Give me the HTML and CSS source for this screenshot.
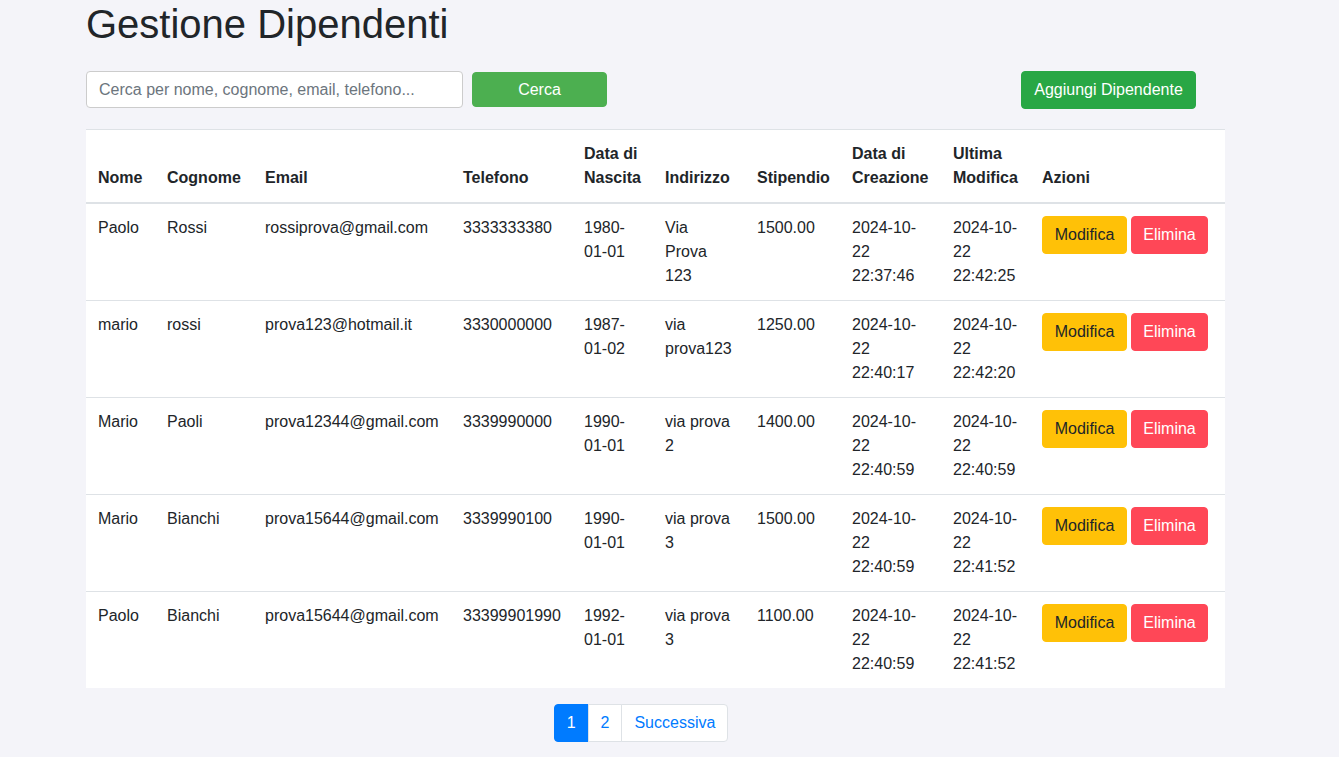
FILE: index.html
```html
<!DOCTYPE html>
<html lang="it">
<head>
<meta charset="utf-8">
<title>Gestione Dipendenti</title>
<link rel="stylesheet" href="styles.css">
</head>
<body>
<div class="container">
  <h1 class="title">Gestione Dipendenti</h1>
  <div class="toolbar">
    <form class="search">
      <input class="search-input" type="text" placeholder="Cerca per nome, cognome, email, telefono...">
      <button class="btn btn-search" type="button">Cerca</button>
    </form>
    <button class="btn btn-add" type="button">Aggiungi Dipendente</button>
  </div>
  <table class="table">
    <colgroup>
      <col class="c-nome"><col class="c-cognome"><col class="c-email"><col class="c-tel"><col class="c-nascita"><col class="c-ind"><col class="c-stip"><col class="c-crea"><col class="c-mod"><col class="c-az">
    </colgroup>
    <thead>
      <tr>
        <th>Nome</th><th>Cognome</th><th>Email</th><th>Telefono</th><th>Data di Nascita</th><th>Indirizzo</th><th>Stipendio</th><th>Data di Creazione</th><th>Ultima Modifica</th><th>Azioni</th>
      </tr>
    </thead>
    <tbody>
      <tr>
        <td>Paolo</td><td>Rossi</td><td>rossiprova@gmail.com</td><td>3333333380</td><td>1980-01-01</td><td>Via Prova 123</td><td>1500.00</td><td>2024-10-22 22:37:46</td><td>2024-10-22 22:42:25</td>
        <td><div class="actions"><button class="btn btn-edit">Modifica</button><button class="btn btn-del">Elimina</button></div></td>
      </tr>
      <tr>
        <td>mario</td><td>rossi</td><td>prova123@hotmail.it</td><td>3330000000</td><td>1987-01-02</td><td>via prova123</td><td>1250.00</td><td>2024-10-22 22:40:17</td><td>2024-10-22 22:42:20</td>
        <td><div class="actions"><button class="btn btn-edit">Modifica</button><button class="btn btn-del">Elimina</button></div></td>
      </tr>
      <tr>
        <td>Mario</td><td>Paoli</td><td>prova12344@gmail.com</td><td>3339990000</td><td>1990-01-01</td><td>via prova 2</td><td>1400.00</td><td>2024-10-22 22:40:59</td><td>2024-10-22 22:40:59</td>
        <td><div class="actions"><button class="btn btn-edit">Modifica</button><button class="btn btn-del">Elimina</button></div></td>
      </tr>
      <tr>
        <td>Mario</td><td>Bianchi</td><td>prova15644@gmail.com</td><td>3339990100</td><td>1990-01-01</td><td>via prova 3</td><td>1500.00</td><td>2024-10-22 22:40:59</td><td>2024-10-22 22:41:52</td>
        <td><div class="actions"><button class="btn btn-edit">Modifica</button><button class="btn btn-del">Elimina</button></div></td>
      </tr>
      <tr>
        <td>Paolo</td><td>Bianchi</td><td>prova15644@gmail.com</td><td>33399901990</td><td>1992-01-01</td><td>via prova 3</td><td>1100.00</td><td>2024-10-22 22:40:59</td><td>2024-10-22 22:41:52</td>
        <td><div class="actions"><button class="btn btn-edit">Modifica</button><button class="btn btn-del">Elimina</button></div></td>
      </tr>
    </tbody>
  </table>
  <nav class="pager">
    <ul class="pagination">
      <li class="page-item active"><a class="page-link">1</a></li>
      <li class="page-item"><a class="page-link">2</a></li>
      <li class="page-item"><a class="page-link">Successiva</a></li>
    </ul>
  </nav>
</div>
</body>
</html>
```
FILE: styles.css
```css
* { box-sizing: border-box; }
html, body { margin: 0; padding: 0; }
body {
  background: #f4f4f9;
  font-family: "Liberation Sans", Arial, sans-serif;
  font-size: 16px;
  line-height: 24px;
  color: #212529;
}
.container {
  width: 1110px;
  margin-left: 86px;
}
.title {
  margin: 0 0 23px 0;
  font-size: 40px;
  line-height: 48px;
  font-weight: 400;
  color: #212529;
}
.toolbar {
  display: flex;
  align-items: flex-start;
  justify-content: space-between;
  height: 38px;
  margin-bottom: 20px;
}
.search {
  display: flex;
  align-items: flex-start;
  margin: 0;
}
.search-input {
  width: 377px;
  height: 37px;
  padding: 6px 12px;
  border: 1px solid #ccc;
  border-radius: 4px;
  font-family: inherit;
  font-size: 16px;
  color: #495057;
  background: #fff;
  outline: none;
}
.search-input::placeholder { color: #6c757d; opacity: 1; }
.btn {
  display: inline-block;
  font-family: inherit;
  font-size: 16px;
  line-height: 24px;
  padding: 6px 12px;
  border: 1px solid transparent;
  border-radius: 4px;
  cursor: pointer;
  text-align: center;
  white-space: nowrap;
}
.btn-search {
  margin-left: 9px;
  margin-top: 1px;
  width: 135px;
  height: 35px;
  padding: 5px 12px;
  background: #4caf50;
  border-color: #4caf50;
  color: #fff;
}
.btn-add {
  width: 175px;
  padding: 6px 0;
  background: #28a745;
  border-color: #28a745;
  color: #fff;
}
.table {
  width: 1139px;
  table-layout: fixed;
  border-collapse: collapse;
  background: #fff;
}
.c-nome { width: 69px; }
.c-cognome { width: 98px; }
.c-email { width: 198px; }
.c-tel { width: 121px; }
.c-nascita { width: 81px; }
.c-ind { width: 92px; }
.c-stip { width: 95px; }
.c-crea { width: 101px; }
.c-mod { width: 89px; }
.c-az { width: 195px; }
.table th, .table td {
  padding: 12px;
  text-align: left;
  border-top: 1px solid #dee2e6;
  vertical-align: top;
}
.table thead th {
  vertical-align: bottom;
  border-bottom: 2px solid #dee2e6;
  font-weight: 700;
}
.table tbody tr:first-child td { border-top: none; }
.actions {
  display: flex;
  gap: 4px;
}
.btn-edit {
  width: 85px;
  padding: 6px 0;
  background: #ffc107;
  border-color: #ffc107;
  color: #212529;
}
.btn-del {
  width: 77px;
  padding: 6px 0;
  background: #ff4757;
  border-color: #ff4757;
  color: #fff;
}
.pager {
  display: flex;
  justify-content: center;
  margin-top: 16px;
}
.pagination {
  display: flex;
  list-style: none;
  margin: 0;
  padding: 0;
}
.page-link {
  display: block;
  padding: 6px 12px;
  line-height: 24px;
  color: #007bff;
  background: #fff;
  border: 1px solid #dee2e6;
  margin-left: -1px;
  cursor: pointer;
}
.page-item:first-child .page-link {
  margin-left: 0;
  border-radius: 4px 0 0 4px;
}
.page-item:last-child .page-link { border-radius: 0 4px 4px 0; }
.page-item.active .page-link {
  background: #007bff;
  border-color: #007bff;
  color: #fff;
}
```
